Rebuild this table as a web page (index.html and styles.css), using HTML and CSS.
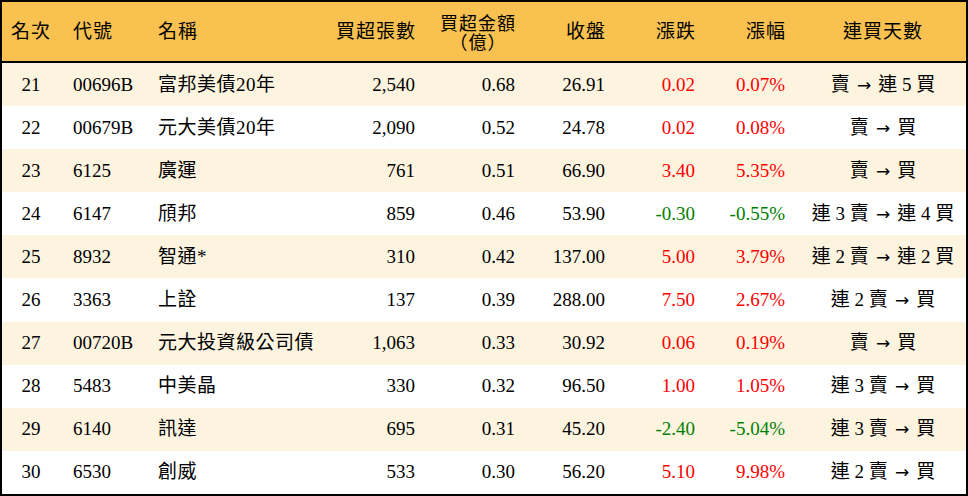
FILE: index.html
```html
<!DOCTYPE html>
<html lang="zh-Hant">
<head>
<meta charset="utf-8">
<title>買超排行</title>
<link rel="stylesheet" href="styles.css">
</head>
<body>
<table class="rank">
  <colgroup>
    <col class="c-rank"><col class="c-code"><col class="c-name"><col class="c-vol"><col class="c-amt"><col class="c-close"><col class="c-chg"><col class="c-pct"><col class="c-days">
  </colgroup>
  <thead>
    <tr>
      <th class="center">名次</th>
      <th class="left">代號</th>
      <th class="left">名稱</th>
      <th class="right">買超張數</th>
      <th class="right"><span class="two"><span class="ln">買超金額</span><span class="ln">（億）</span></span></th>
      <th class="right">收盤</th>
      <th class="right">漲跌</th>
      <th class="right">漲幅</th>
      <th class="center">連買天數</th>
    </tr>
  </thead>
  <tbody>
    <tr class="odd"><td class="center">21</td><td class="left">00696B</td><td class="left cjk">富邦美債20年</td><td class="right">2,540</td><td class="right">0.68</td><td class="right">26.91</td><td class="right up">0.02</td><td class="right up">0.07%</td><td class="center">賣<span class="arr">→</span>連 5 買</td></tr>
    <tr><td class="center">22</td><td class="left">00679B</td><td class="left cjk">元大美債20年</td><td class="right">2,090</td><td class="right">0.52</td><td class="right">24.78</td><td class="right up">0.02</td><td class="right up">0.08%</td><td class="center">賣<span class="arr">→</span>買</td></tr>
    <tr class="odd"><td class="center">23</td><td class="left">6125</td><td class="left cjk">廣運</td><td class="right">761</td><td class="right">0.51</td><td class="right">66.90</td><td class="right up">3.40</td><td class="right up">5.35%</td><td class="center">賣<span class="arr">→</span>買</td></tr>
    <tr><td class="center">24</td><td class="left">6147</td><td class="left cjk">頎邦</td><td class="right">859</td><td class="right">0.46</td><td class="right">53.90</td><td class="right down">-0.30</td><td class="right down">-0.55%</td><td class="center">連 3 賣<span class="arr">→</span>連 4 買</td></tr>
    <tr class="odd"><td class="center">25</td><td class="left">8932</td><td class="left cjk">智通*</td><td class="right">310</td><td class="right">0.42</td><td class="right">137.00</td><td class="right up">5.00</td><td class="right up">3.79%</td><td class="center">連 2 賣<span class="arr">→</span>連 2 買</td></tr>
    <tr><td class="center">26</td><td class="left">3363</td><td class="left cjk">上詮</td><td class="right">137</td><td class="right">0.39</td><td class="right">288.00</td><td class="right up">7.50</td><td class="right up">2.67%</td><td class="center">連 2 賣<span class="arr">→</span>買</td></tr>
    <tr class="odd"><td class="center">27</td><td class="left">00720B</td><td class="left cjk">元大投資級公司債</td><td class="right">1,063</td><td class="right">0.33</td><td class="right">30.92</td><td class="right up">0.06</td><td class="right up">0.19%</td><td class="center">賣<span class="arr">→</span>買</td></tr>
    <tr><td class="center">28</td><td class="left">5483</td><td class="left cjk">中美晶</td><td class="right">330</td><td class="right">0.32</td><td class="right">96.50</td><td class="right up">1.00</td><td class="right up">1.05%</td><td class="center">連 3 賣<span class="arr">→</span>買</td></tr>
    <tr class="odd"><td class="center">29</td><td class="left">6140</td><td class="left cjk">訊達</td><td class="right">695</td><td class="right">0.31</td><td class="right">45.20</td><td class="right down">-2.40</td><td class="right down">-5.04%</td><td class="center">連 3 賣<span class="arr">→</span>買</td></tr>
    <tr><td class="center">30</td><td class="left">6530</td><td class="left cjk">創威</td><td class="right">533</td><td class="right">0.30</td><td class="right">56.20</td><td class="right up">5.10</td><td class="right up">9.98%</td><td class="center">連 2 賣<span class="arr">→</span>買</td></tr>
  </tbody>
</table>
</body>
</html>
```

FILE: styles.css
```css
html, body {
  margin: 0;
  padding: 0;
  background: #ffffff;
}

.rank {
  width: 968px;
  border-collapse: separate;
  border-spacing: 0;
  border: 2px solid #000;
  table-layout: fixed;
  font-family: "Liberation Serif", "Noto Sans CJK TC", serif;
  font-size: 19px;
  color: #000;
}

.c-rank { width: 58px; }
.c-code { width: 85px; }
.c-name { width: 185px; }
.c-vol { width: 100px; }
.c-amt { width: 100px; }
.c-close { width: 90px; }
.c-chg { width: 90px; }
.c-pct { width: 90px; }
.c-days { width: 166px; }

.rank thead tr {
  height: 61px;
}

.rank th {
  background: #f8c150;
  font-weight: normal;
  border-bottom: 2px solid #000;
  padding: 0;
  line-height: 20px;
  vertical-align: middle;
  letter-spacing: 1px;
}

.rank tbody tr {
  height: 43.1px;
  background: #ffffff;
}

.rank tbody tr.odd {
  background: #fdf4e0;
}

.rank td {
  padding: 0;
  vertical-align: middle;
  white-space: nowrap;
  line-height: 22px;
}

.left { text-align: left; padding-left: 13px !important; }
.right { text-align: right; padding-right: 15px !important; }
.rank th.right { padding-right: 14px !important; }
.center { text-align: center; }

.cjk { letter-spacing: 0.5px; }

.two {
  display: inline-flex;
  flex-direction: column;
  align-items: center;
  font-family: "Noto Sans CJK TC", sans-serif;
}

.ln {
  display: block;
  height: 19px;
  line-height: 19px;
  font-size: 18px;
}

.arr {
  font-family: "DejaVu Sans", sans-serif;
  font-size: 17px;
  margin: 0 7px;
}

.up { color: #ff0000; }
.down { color: #008000; }
```
